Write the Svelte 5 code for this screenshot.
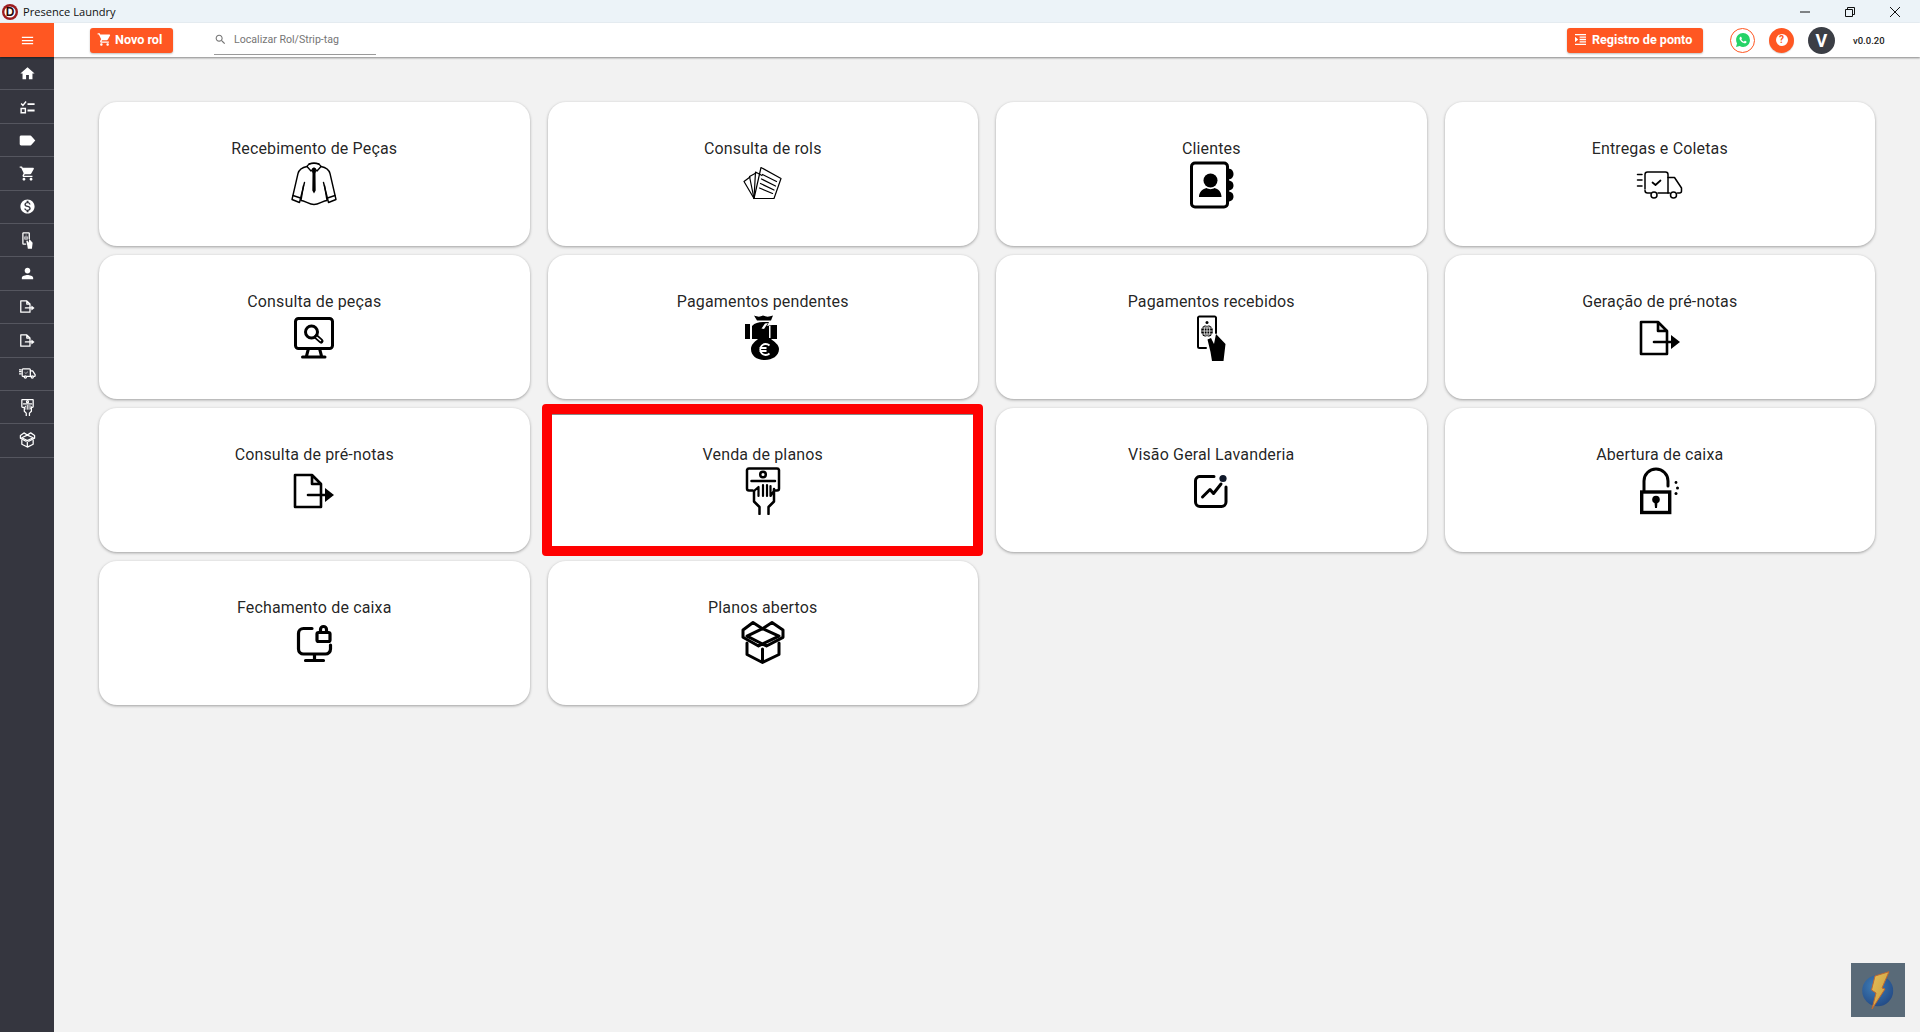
<script lang="ts">
	const s = 'fill="none" stroke="currentColor" stroke-linecap="round" stroke-linejoin="round"';
	const fileOut = `<path ${s} stroke-linecap="butt" stroke-linejoin="miter" stroke-width="2.6" d="M5 8H22L31 17V40H5ZM22 8V17H31"/><path fill="currentColor" d="M22 8L31 17H22Z" opacity=".12"/><path ${s} stroke-linecap="butt" stroke-width="2.6" d="M18 28H36"/><path fill="currentColor" d="M35 21L44 28L35 35Z"/>`;

	const icons: Record<string, { vb: string; body: string }> = {
		shirt: {
			vb: '0 2.5 48 48',
			body: `<g ${s} stroke-width="1.4"><path d="M17 8C12 9 9 11 8 15L2 41L9.500 44L14.500 24"/><path d="M31 8C36 9 39 11 40 15L46 41L38.500 44L33.500 24"/><path d="M13.500 27L11 42C15 42 19 46 24 46C29 46 33 42 37 42L34.500 27"/><path d="M17 8C19 3.500 29 3.500 31 8L27 12.500L24 9.500L21 12.500Z"/><path d="M19 5.500C21 4.500 27 4.500 29 5.500"/><path d="M3 37L10.500 39.500M45 37L37.500 39.500"/></g><path fill="currentColor" d="M22.400 9.500H25.600L26 13L25.500 15L25.700 32L24 35L22.300 32L22.500 15L22 13Z"/>`
		},
		papers: {
			vb: '0 2.5 48 48',
			body: `<g ${s} stroke-width="1.2"><path d="M15 40L22 9L42 20L35 40Z"/><path d="M15 40L16.500 13.500L23 17"/><path d="M15 40L10.500 18L17 14.500"/><path d="M15 40L5 23L11 18.500"/><path d="M23.500 16L37.500 23M22.500 20.500L36.500 27.500M21.500 25L35 31.500M20.500 29.500L33.500 35"/></g>`
		},
		clients: {
			vb: '0 0.5 48 48',
			body: `<rect ${s} stroke-width="3" x="4.500" y="2.500" width="36" height="44" rx="3.500"/><path fill="currentColor" d="M41 8C45 8 46.500 11 46.500 13.500S45 19 41 19ZM41 20C45 20 46.500 22.500 46.500 25S45 30 41 30ZM41 31C45 31 46.500 33.500 46.500 36S45 41 41 41Z"/><circle fill="currentColor" cx="23.500" cy="20" r="7"/><path fill="currentColor" d="M12 36.500C12 31 16 28.500 19.500 27.500C21.500 29 25.500 29 27.500 27.500C31 28.500 34.500 31 34.500 36.500Z"/>`
		},
		truck: {
			vb: '0 1 48 48',
			body: `<g ${s} stroke-width="1.5"><path d="M9 29V14.500A2.500 2.500 0 0 1 11.500 12H29.500A2.500 2.500 0 0 1 32 14.500V33H22M14.500 33H11.500A2.500 2.500 0 0 1 9 30.500"/><path d="M32 17.500H38.500L45.500 28V31A2 2 0 0 1 43.500 33H41.500M33.500 33H32"/><circle cx="18" cy="35" r="3"/><circle cx="37.500" cy="35" r="3"/><path d="M1.500 14.500H6M1.500 20H6M1.500 26H6"/><path d="M16.500 22.500L19.500 25L24.500 20.500" stroke-width="1.700"/></g>`
		},
		monitor: {
			vb: '0 0.5 48 48',
			body: `<g ${s} stroke-width="3"><rect x="5.500" y="5" width="37" height="30" rx="3"/><path d="M18.500 35L16.500 42.500M29.500 35L31.500 42.500M12.500 43.500H35"/><circle cx="21.500" cy="18.500" r="6"/><path d="M26.500 23.500L31 27.500" stroke-width="5"/></g><path d="M27 24L30.500 27" fill="none" stroke="var(--cut)" stroke-width="1.500" stroke-linecap="round"/>`
		},
		bag: {
			vb: '0 2 48 48',
			body: `<path fill="currentColor" d="M15 3.500C19 5 21 5 24 3.500C27 5 30 5 34 3.500L32 8.500H18ZM6 12H11V27H6ZM13 14C16 11 19 10 24 10H30L28 14L33 13H38V27H32C36 30 40 33 40 37C40 44 33 48 26 48C18 48 12 44 12 37C12 33 15 30 19 27H13Z"/><path fill="var(--cut)" d="M26 11.500L29 11L25 17L22.500 16.500ZM30 14H31.500V26H30Z"/><path fill="none" stroke="var(--cut)" stroke-width="1.800" d="M30.500 33.500A5.500 5.500 0 1 0 30.500 41.500M20.500 36H27.500M20.500 39H27.500"/>`
		},
		phone: {
			vb: '0 0 48 48',
			body: `<path ${s} stroke-width="2" d="M19 34H12.500A1.500 1.500 0 0 1 11 32.500V3.500A1.500 1.500 0 0 1 12.500 2.500H27.500A1.500 1.500 0 0 1 29 3.500V19"/><circle fill="currentColor" cx="20" cy="8.500" r="1.500"/><circle fill="currentColor" cx="20" cy="17" r="6"/><path fill="none" stroke="var(--cut)" stroke-width=".8" d="M14 17H26M15 14H25M15 20H25M20 11V23"/><ellipse fill="none" stroke="var(--cut)" stroke-width=".8" cx="20" cy="17" rx="2.800" ry="6"/><path fill="currentColor" d="M20.500 25.500L24 24L27 30L29 20L38.500 30L36.500 47H25L23.500 38Z"/>`
		},
		file: { vb: '0 0 48 48', body: fileOut },
		hand: {
			vb: '0 0 48 48',
			body: `<g ${s} stroke-width="2.500"><path d="M13.500 23.500H10A2 2 0 0 1 8 21.500V3A2 2 0 0 1 10 1.500H38A2 2 0 0 1 40 3V21.500A2 2 0 0 1 38 23.500H36.500"/><circle cx="24" cy="7.500" r="2.800"/><path d="M12.500 14H36"/><path d="M15 24V34.500L20.500 40V47M35 22V34.500L29.500 40V47"/><path d="M15 24L19.500 20M19.500 20V29M24 18V29M28 18V29M31.500 19V29L35 24" stroke-width="2.200"/></g>`
		},
		chart: {
			vb: '0 1 48 48',
			body: `<g ${s} stroke-width="3" stroke="#10182a"><path d="M27 10.500H12.500A4.500 4.500 0 0 0 8.500 15V36A4.500 4.500 0 0 0 13 40.500H34.500A4.500 4.500 0 0 0 39 36V21"/><path d="M15.500 31L23 23.500L26.500 27.500L34 18"/></g><circle fill="#10182a" cx="36" cy="12.500" r="3.600"/>`
		},
		lock: {
			vb: '0 0 48 48',
			body: `<rect fill="none" stroke="currentColor" stroke-width="3.400" x="5.700" y="25" width="28" height="20.500"/><path ${s} stroke-width="3" d="M8 24V14A12 12 0 0 1 32 14V19"/><circle fill="currentColor" cx="20" cy="32.500" r="3.800"/><path fill="currentColor" d="M18.400 34H21.600L21 41H19Z"/><g fill="currentColor"><circle cx="40" cy="15.500" r="1.400"/><circle cx="41.500" cy="21" r="1.500"/><circle cx="40" cy="26.500" r="1.500"/></g>`
		},
		closing: {
			vb: '0 0 48 48',
			body: `<g ${s} stroke-width="3.200"><path d="M22 8.500H13.500A5 5 0 0 0 8.500 13.500V29A5 5 0 0 0 13.500 34H35.500A5 5 0 0 0 40.500 29V25M24.500 34V40.500M15.500 40.500H33.500"/><rect x="27" y="12.500" width="13" height="9" rx="1.500"/><path d="M30.500 12V9.500A3 3 0 0 1 36.500 9.500V12"/></g>`
		},
		box: {
			vb: '0 2 48 48',
			body: `<g ${s} stroke-width="3"><path d="M23.500 10.700L40 18.200L23.500 26L8 18.200Z"/><path d="M23.500 10.700L14 4.500L4 12V19.300L19.500 28L23.500 26L27.500 28L44 19.300V12L33 4.500Z"/><path d="M8 25V36.500L23.500 44.500L40 36.500V25M23.500 31V44"/></g>`
		},
		home: { vb: '0 0 24 24', body: `<path fill="currentColor" d="M10 20v-6h4v6h5v-8h3L12 3 2 12h3v8z"/>` },
		checks: {
			vb: '0 -1.4 24 24',
			body: `<path fill="currentColor" d="M12 6h10v2.500H12zM12 15h10v2.500H12z"/><path fill="none" stroke="currentColor" stroke-width="2" d="M3 13.500h6v6H3zM3 6.500l2.500 2.500L10 3.500"/>`
		},
		tag: {
			vb: '0 -1.4 24 24',
			body: `<path fill="currentColor" d="M17.630 5.840C17.270 5.330 16.670 5 16 5L3 5.010C1.900 5.010 1 5.900 1 7v10c0 1.100.9 1.990 2 1.990L16 19c.67 0 1.270-.33 1.630-.84L23 12l-5.370-6.160z"/>`
		},
		cart: {
			vb: '0 0 24 24',
			body: `<path fill="currentColor" d="M7 18c-1.100 0-1.990.9-1.990 2S5.900 22 7 22s2-.9 2-2-.9-2-2-2zM1 2v2h2l3.600 7.590-1.350 2.450c-.16.28-.25.61-.25.96 0 1.100.9 2 2 2h12v-2H7.420c-.14 0-.25-.11-.25-.25l.03-.12.9-1.630h7.450c.75 0 1.410-.41 1.750-1.030l3.580-6.490c.08-.14.12-.31.12-.48 0-.55-.45-1-1-1H5.210l-.94-2H1zm16 16c-1.100 0-1.990.9-1.990 2s.89 2 1.990 2 2-.9 2-2-.9-2-2-2z"/>`
		},
		dollar: {
			vb: '0 0 24 24',
			body: `<path fill="currentColor" d="M12 2C6.480 2 2 6.480 2 12s4.480 10 10 10 10-4.480 10-10S17.520 2 12 2zm1.410 16.090V20h-2.670v-1.930c-1.710-.36-3.160-1.460-3.270-3.400h1.960c.1 1.050.82 1.870 2.650 1.870 1.960 0 2.400-.98 2.400-1.590 0-.83-.44-1.610-2.670-2.140-2.480-.6-4.180-1.620-4.180-3.670 0-1.720 1.390-2.840 3.110-3.210V4h2.670v1.950c1.860.45 2.790 1.860 2.870 3.390H14.300c-.05-1.110-.64-1.870-2.220-1.870-1.500 0-2.400.68-2.400 1.640 0 .84.65 1.390 2.670 1.910s4.180 1.390 4.180 3.910c-.01 1.830-1.380 2.830-3.120 3.160z"/>`
		},
		person: {
			vb: '0 0 24 24',
			body: `<path fill="currentColor" d="M12 12c2.210 0 4-1.790 4-4s-1.790-4-4-4-4 1.790-4 4 1.790 4 4 4zm0 2c-2.670 0-8 1.340-8 4v2h16v-2c0-2.660-5.330-4-8-4z"/>`
		}
	};

	const cards = [
		{ title: 'Recebimento de Peças', icon: 'shirt' },
		{ title: 'Consulta de rols', icon: 'papers' },
		{ title: 'Clientes', icon: 'clients' },
		{ title: 'Entregas e Coletas', icon: 'truck' },
		{ title: 'Consulta de peças', icon: 'monitor' },
		{ title: 'Pagamentos pendentes', icon: 'bag' },
		{ title: 'Pagamentos recebidos', icon: 'phone' },
		{ title: 'Geração de pré-notas', icon: 'file' },
		{ title: 'Consulta de pré-notas', icon: 'file' },
		{ title: 'Venda de planos', icon: 'hand', marked: true },
		{ title: 'Visão Geral Lavanderia', icon: 'chart' },
		{ title: 'Abertura de caixa', icon: 'lock' },
		{ title: 'Fechamento de caixa', icon: 'closing' },
		{ title: 'Planos abertos', icon: 'box' }
	];

	const menu = ['home', 'checks', 'tag', 'cart', 'dollar', 'phone', 'person', 'file', 'file', 'truck', 'hand', 'box'];
</script>

{#snippet icon(name: string)}
	<svg viewBox={icons[name].vb} aria-hidden="true">{@html icons[name].body}</svg>
{/snippet}

<div class="window">
	<header class="titlebar">
		<svg class="logo" viewBox="0 0 16 16" aria-hidden="true">
			<circle cx="8" cy="8" r="8" fill="#9c1c1f" />
			<circle cx="8" cy="8" r="5.600" fill="#fff" />
			<text x="8" y="12.300" text-anchor="middle">D</text>
		</svg>
		<span class="app-name">Presence Laundry</span>
		<div class="win-controls">
			<svg viewBox="0 0 10 10" aria-hidden="true"><path d="M0 5H10" /></svg>
			<svg viewBox="0 0 10 10" aria-hidden="true"><path d="M.5 2.500H7.500V9.500H.5ZM2.500 2.500V.5H9.500V7.500H7.500" /></svg>
			<svg viewBox="0 0 10 10" aria-hidden="true"><path d="M0 0L10 10M10 0L0 10" /></svg>
		</div>
	</header>

	<div class="toolbar">
		<button type="button" class="burger" aria-label="Menu">
			<svg viewBox="0 0 24 24"><path d="M3 18h18v-2H3v2zm0-5h18v-2H3v2zm0-7v2h18V6H3z" /></svg>
		</button>
		<button type="button" class="action novo">
			<span class="action__icon">{@render icon('cart')}</span>
			Novo rol
		</button>
		<div class="search">
			<svg viewBox="0 0 24 24" aria-hidden="true">
				<path d="M15.500 14h-.79l-.28-.27C15.410 12.590 16 11.110 16 9.500 16 5.910 13.090 3 9.500 3S3 5.910 3 9.500 5.910 16 9.500 16c1.610 0 3.090-.59 4.230-1.570l.27.28v.79l5 4.990L20.490 19l-4.990-5zm-6 0C7.010 14 5 11.990 5 9.500S7.010 5 9.500 5 14 7.010 14 9.500 11.990 14 9.500 14z" />
			</svg>
			<span>Localizar Rol/Strip-tag</span>
		</div>
		<div class="toolbar__right">
			<button type="button" class="action ponto">
				<svg viewBox="0 0 12 12" aria-hidden="true">
					<path d="M0 0H12V1.400H0ZM5 2.600H12V4H5ZM5 5.300H12V6.700H5ZM5 8H12V9.400H5ZM0 10.600H12V12H0ZM0 3L3.500 6L0 9Z" />
				</svg>
				Registro de ponto
			</button>
			<span class="round whatsapp">
				<svg viewBox="0 0 24 24" aria-hidden="true">
					<path fill="#25d366" d="M20.464 3.488A11.815 11.815 0 0 0 12.050 0C5.495 0 .16 5.335.157 11.892c0 2.096.547 4.142 1.588 5.945L.057 24l6.305-1.654a11.882 11.882 0 0 0 5.683 1.448h.005c6.554 0 11.890-5.335 11.893-11.893a11.821 11.821 0 0 0-3.480-8.413z" />
					<path fill="#fff" d="M17.472 14.382c-.297-.149-1.758-.867-2.030-.967-.273-.099-.471-.148-.67.15-.197.297-.767.966-.94 1.164-.173.199-.347.223-.644.075-.297-.15-1.255-.463-2.390-1.475-.883-.788-1.480-1.761-1.653-2.059-.173-.297-.018-.458.13-.606.134-.133.298-.347.446-.52.149-.174.198-.298.298-.497.099-.198.05-.371-.025-.52-.075-.149-.669-1.612-.916-2.207-.242-.579-.487-.5-.669-.51-.173-.008-.371-.01-.57-.01-.198 0-.52.074-.792.372-.272.297-1.040 1.016-1.040 2.479 0 1.462 1.065 2.875 1.213 3.074.149.198 2.096 3.200 5.077 4.487.709.306 1.262.489 1.694.625.712.227 1.360.195 1.871.118.571-.085 1.758-.719 2.006-1.413.248-.694.248-1.289.173-1.413-.074-.124-.272-.198-.57-.347" />
				</svg>
			</span>
			<span class="round help"><span>?</span></span>
			<span class="avatar">V</span>
			<span class="version">v0.0.20</span>
		</div>
	</div>

	<div class="body">
		<nav class="sidebar">
			{#each menu as item}
				<div class="sidebar__item">{@render icon(item)}</div>
			{/each}
		</nav>
		<main class="content">
			<div class="grid">
				{#each cards as card}
					<div class="card" class:marked={card.marked}>
						<div class="card__title">{card.title}</div>
						<div class="card__icon">{@render icon(card.icon)}</div>
					</div>
				{/each}
			</div>
		</main>
	</div>

	<div class="badge">
		<svg viewBox="0 0 54 54" aria-hidden="true">
			<defs>
				<radialGradient id="globe" cx="40%" cy="35%" r="70%">
					<stop offset="0" stop-color="#3f7fb8" />
					<stop offset="1" stop-color="#234a85" />
				</radialGradient>
				<linearGradient id="bolt" x1="0" y1="0" x2="1" y2="1">
					<stop offset="0" stop-color="#e4bf58" />
					<stop offset="1" stop-color="#c99a3c" />
				</linearGradient>
			</defs>
			<circle cx="26.700" cy="27.700" r="15.500" fill="url(#globe)" />
			<path fill="url(#bolt)" stroke="#c0672f" stroke-width="1" d="M24 13L38 8.700L31 25L34 26L21 46L25 30L20.500 27Z" />
		</svg>
	</div>
</div>

<style>
	:global(body) {
		background: #f2f2f2;
	}

	.window {
		position: relative;
		display: flex;
		flex-direction: column;
		height: 100vh;
		overflow: hidden;
		background: #f2f2f2;
		font-family: Roboto, 'Liberation Sans', sans-serif;
		color: rgba(0, 0, 0, 0.87);
	}

	.titlebar {
		display: flex;
		align-items: center;
		flex: 0 0 23px;
		background: #ecf3f8;
	}

	.logo {
		width: 16px;
		height: 16px;
		margin-left: 2px;
	}

	.logo text {
		font-family: 'Liberation Sans', sans-serif;
		font-size: 12px;
		font-weight: 700;
		fill: #2a0a0a;
	}

	.app-name {
		margin-left: 5px;
		font-family: 'Open Sans', sans-serif;
		font-size: 11.100px;
		color: #111;
	}

	.win-controls {
		display: flex;
		gap: 35px;
		margin-left: auto;
		margin-right: 20px;
	}

	.win-controls svg {
		width: 10px;
		height: 10px;
		fill: none;
		stroke: #111;
		stroke-width: 1;
	}

	.toolbar {
		position: relative;
		z-index: 2;
		display: flex;
		align-items: center;
		flex: 0 0 34px;
		background: #fff;
		box-shadow: 0 1px 2px rgba(0, 0, 0, 0.45);
	}

	.burger {
		display: flex;
		align-items: center;
		justify-content: center;
		width: 54px;
		height: 34px;
		padding: 0;
		border: 0;
		background: #ff5722;
	}

	.burger svg {
		width: 15px;
		height: 15px;
		fill: #fff;
	}

	.action {
		display: flex;
		align-items: center;
		height: 25px;
		padding: 0 0 1px;
		border: 0;
		border-radius: 3px;
		background: #ff5722;
		color: #fff;
		font-family: Roboto, sans-serif;
		font-size: 12.600px;
		font-weight: 700;
		box-shadow: 0 1px 2px rgba(0, 0, 0, 0.25);
	}

	.novo {
		width: 83px;
		margin-left: 36px;
		padding-left: 7px;
		gap: 3px;
	}

	.action__icon {
		display: flex;
	}

	.action__icon svg {
		width: 15px;
		height: 15px;
	}

	.search {
		display: flex;
		align-items: center;
		gap: 7px;
		width: 162px;
		height: 30px;
		margin-left: 41px;
		box-sizing: border-box;
		border-bottom: 1.500px solid #9a9a9a;
		font-size: 10.600px;
		color: #757575;
	}

	.search svg {
		width: 13px;
		height: 13px;
		fill: #757575;
	}

	.toolbar__right {
		display: flex;
		align-items: center;
		margin-left: auto;
	}

	.ponto {
		gap: 6px;
		width: 136px;
		padding-left: 8px;
	}

	.ponto svg {
		width: 11px;
		height: 11px;
		fill: #fff;
	}

	.round {
		display: flex;
		align-items: center;
		justify-content: center;
		box-sizing: border-box;
		width: 25px;
		height: 25px;
		border-radius: 50%;
	}

	.whatsapp {
		margin-left: 27px;
		border: 1px solid #ff5722;
		background: #fff;
	}

	.whatsapp svg {
		width: 14px;
		height: 14px;
	}

	.help {
		margin-left: 14px;
		background: #ff5722;
		box-shadow: 0 1px 1px rgba(0, 0, 0, 0.15);
	}

	.help span {
		width: 12px;
		height: 12px;
		border-radius: 50%;
		background: #fff;
		color: #ff5722;
		font-size: 10px;
		font-weight: 700;
		line-height: 12px;
		text-align: center;
	}

	.avatar {
		display: flex;
		align-items: center;
		justify-content: center;
		width: 27px;
		height: 27px;
		margin-left: 14px;
		border-radius: 50%;
		background: #3b3e45;
		color: #fff;
		font-size: 18px;
		font-weight: 700;
	}

	.version {
		width: 67px;
		margin-left: 18px;
		font-size: 9.500px;
		font-weight: 500;
		color: #222;
	}

	.body {
		display: flex;
		flex: 1;
		min-height: 0;
	}

	.sidebar {
		flex: 0 0 54px;
		background: #35363f;
		color: #fff;
		--cut: #35363f;
	}

	.sidebar__item {
		display: flex;
		align-items: center;
		justify-content: center;
		box-sizing: border-box;
		height: 33.400px;
		border-bottom: 1px solid #55565f;
	}

	.sidebar__item svg {
		width: 17px;
		height: 17px;
	}

	.sidebar__item :global([stroke-linecap]) {
		stroke-width: 3.600;
	}

	.content {
		flex: 1;
		padding: 45px 45px 0;
	}

	.grid {
		display: grid;
		grid-template-columns: repeat(4, 1fr);
		grid-auto-rows: 144px;
		gap: 9px 18px;
	}

	.card {
		position: relative;
		box-sizing: border-box;
		padding-top: 35px;
		border-radius: 18px;
		background: #fff;
		box-shadow: 0 1px 3px rgba(0, 0, 0, 0.35);
		color: #000;
		--cut: #fff;
	}

	.marked::before {
		content: '';
		position: absolute;
		inset: -4px -5px -4px -6px;
		border: 10px solid #f00;
		border-radius: 4px;
		background: #fff;
		box-shadow: inset 0 1px 0 #888;
	}

	.card__title {
		position: relative;
		font-size: 16px;
		line-height: 24px;
		letter-spacing: 0.15px;
		text-align: center;
		color: rgba(0, 0, 0, 0.87);
	}

	.card__icon {
		position: relative;
		display: flex;
		justify-content: center;
	}

	.card__icon svg {
		width: 48px;
		height: 48px;
	}

	.badge {
		position: absolute;
		top: 963px;
		left: 1851px;
		width: 54px;
		height: 54px;
		background: #596a78;
	}

	.badge svg {
		display: block;
	}
</style>
